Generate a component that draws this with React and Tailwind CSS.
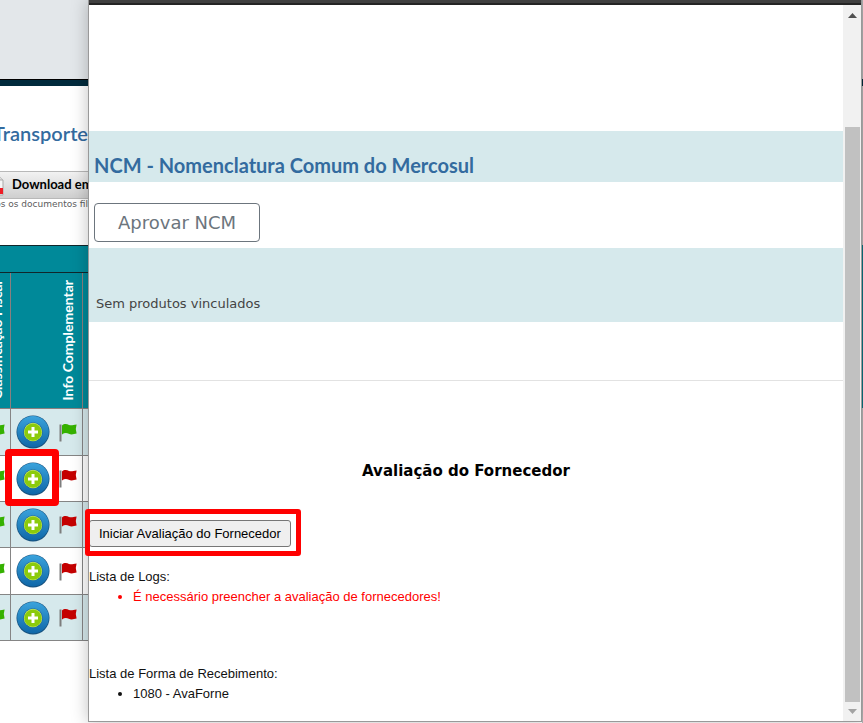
import React from 'react';

const rows = [
  { id: 1, flag: 'green', shaded: true },
  { id: 2, flag: 'red', shaded: false, marked: true },
  { id: 3, flag: 'red', shaded: true },
  { id: 4, flag: 'red', shaded: false },
  { id: 5, flag: 'red', shaded: true },
];

const PlusIcon = () => (
  <svg width="34" height="34" viewBox="0 0 34 34" aria-hidden="true">
    <defs>
      <linearGradient id="ring" x1="0" y1="0" x2="0" y2="1">
        <stop offset="0" stopColor="#3ba3dc" />
        <stop offset="1" stopColor="#0f67a8" />
      </linearGradient>
    </defs>
    <circle cx="17" cy="17" r="16.5" fill="#17527f" />
    <circle cx="17" cy="16.7" r="15.8" fill="url(#ring)" />
    <circle cx="17" cy="17" r="9.8" fill="#1c659d" />
    <circle cx="17" cy="17" r="9.2" fill="#c5e86a" />
    <circle cx="17" cy="17.2" r="8.6" fill="#8ccb0c" />
    <path d="M17 12v10M12 17h10" stroke="#fff" strokeWidth="3" />
  </svg>
);

const FlagIcon = ({ color }) => (
  <svg className="shrink-0" width="18" height="19" viewBox="0 0 18 19" aria-hidden="true">
    <path d="M1.5 1.5v17" stroke="#7d7d7d" strokeWidth="2" />
    <path
      d="M3 2.500c2-2.2 5-1.800 7-.6 2 1 4 .2 7.600-.4l-.8 4.500.8 4.600c-3 .8-5.800 1.200-7.800.2-2.300-1.200-4.500-1-6.800.6z"
      fill={color == 'green' ? '#35b100' : '#c40000'}
    />
  </svg>
);

const PdfIcon = () => (
  <svg width="18" height="22" viewBox="0 0 18 22" className="shrink-0" aria-hidden="true">
    <path d="M1 1h11l5 5v15H1z" fill="#f6f6f6" stroke="#a9a9a9" />
    <path d="M12 1v5h5" fill="#ddd" stroke="#a9a9a9" />
    <path d="M1 14h16v6H1z" fill="#ee1c25" />
  </svg>
);

const Documents = () => (
  <div className="w-[88px] shrink-0 overflow-hidden bg-white">
    <div className="h-[79px] bg-[#e3e7ea]" />
    <div className="h-[7px] border-t border-black bg-[#002a3c]" />
    <h2 className="mt-[33px] flex justify-end whitespace-nowrap text-[20px] leading-7 font-semibold text-[#336b9f]">
      Transporte
    </h2>
    <button
      type="button"
      className="-ml-[14px] mt-6 flex h-7 w-[160px] items-center gap-2 border-y border-[#b8b8b8] bg-linear-to-b from-[#f2f2f2] to-[#cfcfcf] text-[13px] font-bold whitespace-nowrap text-black"
    >
      <PdfIcon />
      Download em PDF
    </button>
    <p className="-ml-[20px] w-[160px] font-['DejaVu_Sans'] text-[9px] leading-[11px] whitespace-nowrap text-[#5c5c5c]">
      Todos os documentos filtrados
    </p>
    <table className="mt-[35px] w-[100px] table-fixed border-separate border-spacing-0">
      <colgroup>
        <col className="w-[11px]" />
        <col className="w-[72px]" />
        <col className="w-[17px]" />
      </colgroup>
      <thead className="bg-[#008999] text-[14px] leading-4 text-white">
        <tr>
          <td colSpan={3} className="h-7 border-y border-[#10262b] p-0" />
        </tr>
        <tr className="h-[136px]">
          <th className="overflow-hidden border-r border-b border-[#8a7f7f] p-0">
            <div className="flex justify-end pr-[5px]">
              <span className="rotate-180 whitespace-nowrap [writing-mode:vertical-rl]">Classificação Fiscal</span>
            </div>
          </th>
          <th className="border-r border-b border-[#8a7f7f] p-0">
            <div className="flex justify-end pr-[6px]">
              <span className="rotate-180 whitespace-nowrap [writing-mode:vertical-rl]">Info Complementar</span>
            </div>
          </th>
          <th className="border-b border-[#8a7f7f] p-0" />
        </tr>
      </thead>
      <tbody>
        {rows.map((row) => (
          <tr key={row.id} className={`h-[46px] nth-[3n+1]:h-[47px] ${row.shaded ? 'bg-[#d6e9ec]' : 'bg-white'}`}>
            <td className="overflow-hidden border-r border-b border-[#858585] p-0">
              <div className="flex justify-end pr-[5px]">
                <FlagIcon color="green" />
              </div>
            </td>
            <td className="relative border-r border-b border-[#858585] p-0">
              <div className="flex items-center justify-between pr-[5px] pl-[5px]">
                <button type="button" aria-label="Adicionar informação">
                  <PlusIcon />
                </button>
                <FlagIcon color={row.flag} />
              </div>
              {row.marked && (
                <div className="pointer-events-none absolute -top-[7px] -left-[6px] z-10 h-[57px] w-[54px] rounded-[4px] border-7 border-[#ff0000]" />
              )}
            </td>
            <td className="border-b border-[#858585] p-0" />
          </tr>
        ))}
      </tbody>
    </table>
  </div>
);

const Scrollbar = () => (
  <div className="flex w-[18px] shrink-0 flex-col items-center bg-[#f1f1f1] pl-px" aria-hidden="true">
    <svg className="mt-2" width="9" height="5" viewBox="0 0 9 5">
      <path d="M4.500 0L9 5H0z" fill="#505050" />
    </svg>
    <div className="mt-[109px] w-[15px] grow bg-[#c1c1c1]" />
    <svg className="my-[7px]" width="9" height="5" viewBox="0 0 9 5">
      <path d="M0 0h9L4.500 5z" fill="#a3a3a3" />
    </svg>
  </div>
);

const Popup = () => (
  <main className="relative z-10 mb-px flex min-w-0 grow flex-col border-x border-b border-[#999] bg-white shadow-[0_0_16px_rgba(0,0,0,0.25)]">
    <div className="h-[5px] border-b-2 border-[#242424] bg-[#404040]" />
    <div className="flex grow">
      <div className="min-w-0 grow pt-[126px]">
        <h1 className="bg-[#d6e9ec] pt-5 pb-[3px] pl-[5px] text-[20px] leading-7 font-bold text-[#336b9f]">
          NCM - Nomenclatura Comum do Mercosul
        </h1>
        <div className="pt-[21px] pb-[6px] pl-[5px]">
          <button
            type="button"
            className="block h-[39px] rounded-[4px] border border-[#6c757d] bg-white px-[23px] font-['DejaVu_Sans'] text-[18px] text-[#6c757d]"
          >
            Aprovar NCM
          </button>
        </div>
        <p className="bg-[#d6e9ec] pt-[46px] pb-2 pl-[7px] font-['DejaVu_Sans'] text-[13px] leading-5 text-[#444]">
          Sem produtos vinculados
        </p>
        <hr className="mt-[58px] border-[#e2e2e2]" />
        <h2 className="mt-[78px] text-center font-['DejaVu_Sans'] text-[15px] leading-6 font-bold text-black">
          Avaliação do Fornecedor
        </h2>
        <div className="font-['Liberation_Sans'] text-[13px] leading-5 text-[#111]">
          <div className="relative mt-[37px]">
            <button type="button" className="block h-[27px] rounded-[3px] border border-[#767676] bg-[#efefef] px-[9px] text-black">
              Iniciar Avaliação do Fornecedor
            </button>
            <div className="pointer-events-none absolute -top-[11px] -left-1 h-[47px] w-[216px] rounded-[3px] border-5 border-[#ff0000]" />
          </div>
          <p className="mt-5">Lista de Logs:</p>
          <ul className="list-disc pl-11 text-[#ff0000]">
            <li>É necessário preencher a avaliação de fornecedores!</li>
          </ul>
          <p className="mt-[57px]">Lista de Forma de Recebimento:</p>
          <ul className="list-disc pl-11">
            <li>1080 - AvaForne</li>
          </ul>
        </div>
      </div>
      <Scrollbar />
    </div>
  </main>
);

const PageEdge = () => (
  <div className="flex w-px shrink-0 flex-col bg-[#b5b5b5]">
    <div className="h-[79px]" />
    <div className="h-[7px] bg-[#002a3c]" />
    <div className="mt-[159px] h-[163px] bg-[#0b7480]" />
  </div>
);

export default function App() {
  return (
    <div className="flex min-h-screen bg-white font-[Lato,sans-serif]">
      <Documents />
      <Popup />
      <PageEdge />
    </div>
  );
}
